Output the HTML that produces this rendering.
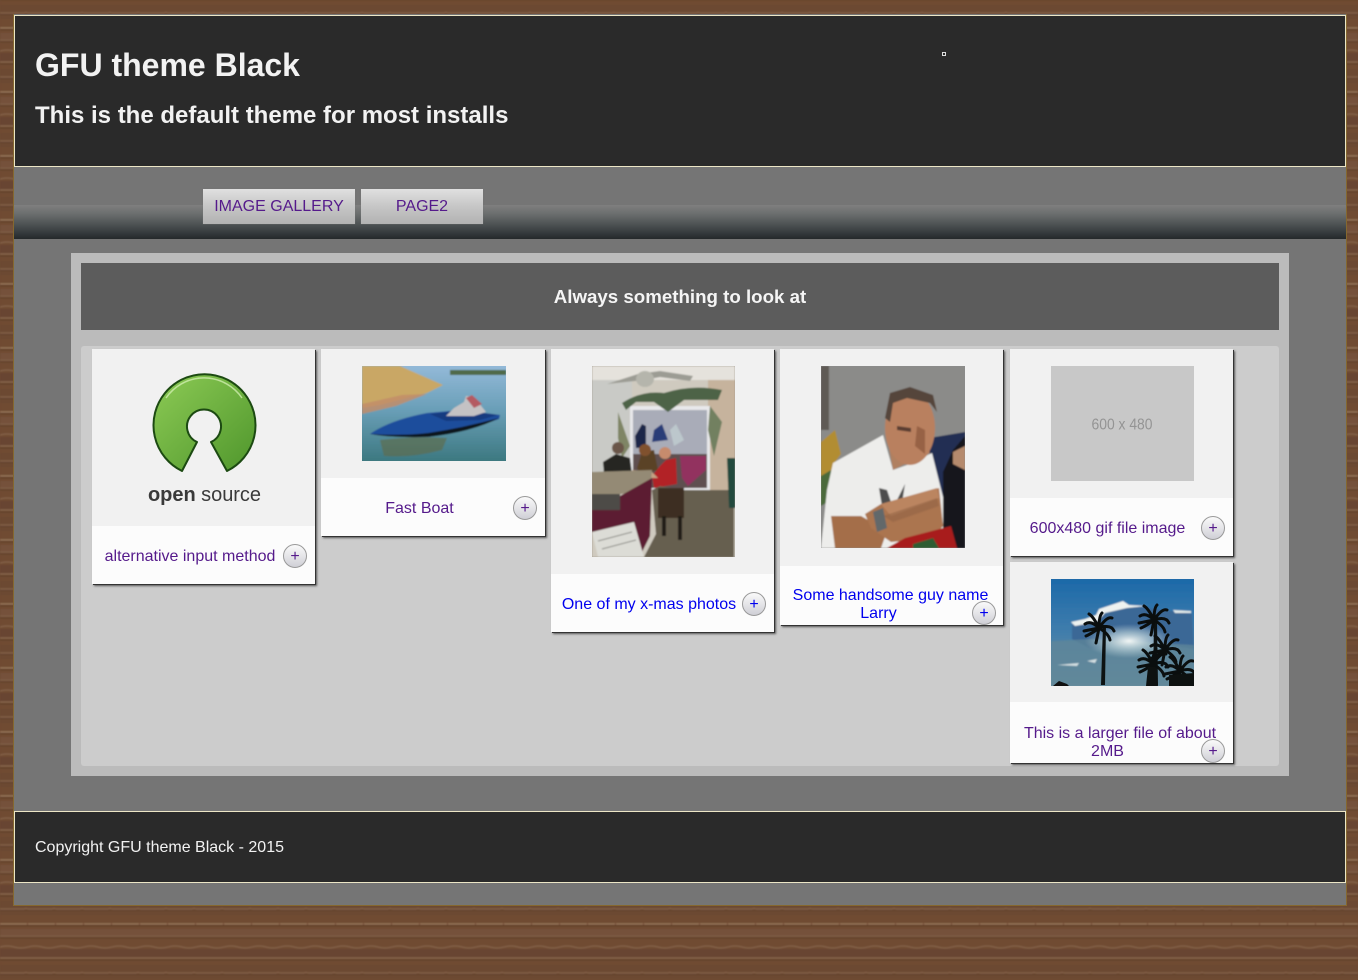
<!DOCTYPE html>
<html><head><meta charset="utf-8"><title>GFU theme Black</title>
<style>
html,body{margin:0;padding:0;width:1358px;height:980px;overflow:hidden;background:#6e4b32;font-family:"Liberation Sans",sans-serif}
.a{position:absolute}
.t{position:absolute;white-space:nowrap;font-size:16px;line-height:18px;color:#551a8b;transform:translateX(-50%)}
.b{color:#0000ee}
.card{position:absolute;width:223px;background:#f1f1f1;box-shadow:1px 1px 0 #333,2px 2px 2px #555;overflow:visible}
.cap{position:absolute;left:0;right:0;bottom:0;background:#fcfcfc}
.plus{position:absolute;width:22px;height:22px;border:1px solid #999;border-radius:50%;background:linear-gradient(#fafafa,#cfcfd6);font-size:16px;line-height:23px;text-align:center;color:#551a8b}
.btn{position:absolute;top:189px;height:35px;line-height:35px;text-align:center;font-size:16px;color:#551a8b;background:linear-gradient(#e0e0e0,#c6c6c6 50%,#b2b2b2);box-shadow:0 0 1px #777;box-sizing:border-box}
svg{display:block;position:absolute}
</style></head><body>
<svg style="left:0;top:0" width="1358" height="980">
<defs>
<pattern id="w" x="0" y="5" width="28" height="64" patternUnits="userSpaceOnUse">
<rect width="28" height="64" fill="#6f4b31"/>
<rect y="0" width="28" height="14" fill="#6c4830"/>
<rect y="28" width="28" height="8" fill="#75513a"/>
<rect y="48" width="28" height="8" fill="#674430"/>
<path d="M0 8H24Q26 7 28 8" stroke="#84624a" stroke-width="1.200" fill="none"/>
<path d="M0 9.500H28" stroke="#5e3f2a" stroke-width="1"/>
<path d="M0 23H27" stroke="#97745a" stroke-width="1.400"/>
<path d="M0 24.500H28" stroke="#54361f" stroke-width="1"/>
<path d="M0 35H28" stroke="#80604a" stroke-width="1"/>
<path d="M0 37H28" stroke="#5f3f2b" stroke-width="1"/>
<path d="M0 46Q7 44 14 46T28 46" stroke="#84624a" stroke-width="1.200" fill="none"/>
<path d="M0 57H28" stroke="#886650" stroke-width="1.200"/>
<path d="M0 59H28" stroke="#5c3c28" stroke-width="1"/>
</pattern>
<filter id="s"><feGaussianBlur stdDeviation=".7"/></filter>
</defs>
<rect width="1358" height="980" fill="url(#w)" filter="url(#s)"/>
</svg>

<div class="a" style="left:13px;top:14px;width:1332px;height:891px;background:#757575;border:1px solid #85682f;border-top:0"></div>

<div class="a" style="left:14px;top:15px;width:1330px;height:150px;background:#2a2a2a;border:1px solid #ece6c6"></div>
<div class="a" style="left:35px;top:46px;font-size:32px;line-height:38px;font-weight:bold;color:#f2f2f2;white-space:nowrap">GFU theme Black</div>
<div class="a" style="left:35px;top:101px;font-size:24px;line-height:30px;font-weight:bold;color:#f2f2f2;white-space:nowrap">This is the default theme for most installs</div>
<div class="a" style="left:942px;top:52px;width:2px;height:2px;border:1px solid #ddd"></div>

<div class="a" style="left:14px;top:205px;width:1332px;height:34px;background:linear-gradient(#7f7f7f 0,#6c6f6f 25%,#4f5455 55%,#32373a 85%,#24282a 100%)"></div>
<div class="btn" style="left:203px;width:152px">IMAGE GALLERY</div>
<div class="btn" style="left:361px;width:122px">PAGE2</div>

<div class="a" style="left:71px;top:253px;width:1218px;height:523px;background:#bbb"></div>
<div class="a" style="left:81px;top:263px;width:1198px;height:67px;background:#5c5c5c"></div>
<div class="a" style="left:81px;top:286px;width:1198px;text-align:center;font-size:18.720px;line-height:21px;font-weight:bold;color:#f5f5f5">Always something to look at</div>
<div class="a" style="left:81px;top:346px;width:1198px;height:420px;background:#ccc;border-radius:3px"></div>

<!-- card 1 -->
<div class="card" style="left:92px;top:349px;height:235px"><div class="cap" style="height:58px"></div></div>
<svg style="left:148px;top:370px" width="114" height="140" viewBox="148 370 114 140">
<defs><linearGradient id="g1" x1="0" y1="0" x2="1" y2="1"><stop offset="0" stop-color="#8dcb55"/><stop offset="1" stop-color="#4f962c"/></linearGradient></defs>
<path d="M182 471A51 51 0 1 1 227 471L211 442A17 17 0 1 0 197 442Z" fill="url(#g1)" stroke="#1c4a12" stroke-width="2" stroke-linejoin="round"/>
<path d="M166 398A46 46 0 0 1 242 398" fill="none" stroke="#d4f0b4" stroke-width="1.500" opacity=".75"/>
<text x="148" y="501" font-family="Liberation Sans" font-size="20" fill="#3a3a3a" textLength="113"><tspan font-weight="bold">open</tspan> source</text>
</svg>
<div class="t" style="left:190px;top:548px">alternative input method</div>
<div class="plus" style="left:283px;top:544px">+</div>

<!-- card 2 -->
<div class="card" style="left:321px;top:349px;height:187px;width:224px"><div class="cap" style="height:58px"></div></div>
<svg style="left:362px;top:366px" width="144" height="95" viewBox="0 0 144 95">
<defs><linearGradient id="g2" x1="0" y1="0" x2="0" y2="1"><stop offset="0" stop-color="#93b9d8"/><stop offset=".45" stop-color="#6a9fb8"/><stop offset="1" stop-color="#3c7880"/></linearGradient></defs>
<rect width="144" height="95" fill="url(#g2)"/>
<g filter="url(#s)">
<rect width="144" height="95" fill="url(#g2)"/>
<path d="M0 0H38L81 19L65 27L18 39L0 42Z" fill="#c9a765"/>
<path d="M0 38L40 29L65 28L34 40L0 48Z" fill="#c28d68" opacity=".85"/>
<path d="M88 4H144V9H88Z" fill="#4f6b48"/>
<path d="M18 74Q50 70 85 72L80 84Q50 92 22 90Z" fill="#5e6c4f" opacity=".7"/>
<path d="M8 68Q28 54 65 47L100 44L138 49L137 53Q95 68 65 70Q30 71 8 68Z" fill="#1f4e9c"/>
<path d="M8 68Q40 70 66 67Q100 62 137 52Q110 66 66 71Q30 72 8 68Z" fill="#0c141f"/>
<path d="M68 48L100 44L136 49L118 54L84 55Z" fill="#163a80"/>
<path d="M84 50L92 42L102 36L104 30L112 31L124 46L112 50Z" fill="#c4c2c4"/>
<path d="M104 32L110 29L120 38L112 42Z" fill="#b45a62"/>
</g>
</svg>
<div class="t" style="left:419.500px;top:500px">Fast Boat</div>
<div class="plus" style="left:513px;top:496px">+</div>

<!-- card 3 -->
<div class="card" style="left:551px;top:349px;height:283px"><div class="cap" style="height:58px"></div></div>
<svg style="left:592px;top:366px" width="143" height="191" viewBox="0 0 143 191">
<rect width="143" height="191" fill="#9c9488"/>
<g filter="url(#s)">
<rect width="143" height="191" fill="#cfcabf"/>
<rect width="143" height="14" fill="#e5e2dc"/>
<rect x="0" y="14" width="40" height="110" fill="#c9cac6"/>
<rect x="116" y="14" width="27" height="110" fill="#c6b39d"/>
<rect x="38" y="40" width="80" height="84" fill="#e8e8ea"/>
<rect x="41" y="44" width="74" height="48" fill="#a9acb8"/>
<rect x="41" y="88" width="74" height="34" fill="#5f4f50"/>
<path d="M15 18L46 8L68 5L101 10L98 15L68 11L52 14Z" fill="#9c9c94"/>
<ellipse cx="53" cy="13" rx="9" ry="8" fill="#b5b5ac"/>
<path d="M30 37Q50 24 72 27Q100 18 130 24L126 34L92 34L76 46L62 36L44 36L34 44Z" fill="#4e6446"/>
<path d="M26 46L38 80L30 92L26 72Z" fill="#7f8565"/>
<path d="M118 40L130 56L122 90L116 64Z" fill="#728061"/>
<path d="M43 70L50 58L54 60L54 82L44 82Z" fill="#1f2648"/><path d="M62 64L70 58L76 74L60 76Z" fill="#2b3e78"/><path d="M78 64L84 58L92 74L82 80Z" fill="#bcc7cc"/>
<path d="M88 90H114V104L96 120L90 112Z" fill="#92305f"/>
<path d="M11 96L24 88L38 92L40 108L12 108Z" fill="#262520"/><circle cx="26" cy="82" r="6" fill="#6b574a"/>
<path d="M45 102L50 86L62 84L66 104L48 108Z" fill="#5a4228"/><circle cx="53" cy="84" r="6" fill="#80512e"/>
<path d="M68 100L74 94L84 92L85 118L62 122L60 110Z" fill="#b22428"/><circle cx="73" cy="87" r="6" fill="#c78b6d"/>
<path d="M40 104L60 106L66 112L44 112Z" fill="#c4a183"/>
<path d="M0 106L60 104L58 124L0 132Z" fill="#948a74"/>
<path d="M0 130H28L60 112L58 170L50 186L0 166Z" fill="#5c1a32"/>
<path d="M0 128H28V144H0Z" fill="#4d4b46"/>
<path d="M60 124L68 120L90 124L142 124V191H52L64 168Z" fill="#665e50"/>
<path d="M66 122H92V152H66Z" fill="#3d2f24"/><path d="M70 150H74V170H70ZM86 150H90V174H86Z" fill="#241a14"/>
<path d="M0 166L42 156L52 191H6Z" fill="#dcdcd6"/>
<path d="M6 175L40 166M10 183L44 174" stroke="#8d8d88" stroke-width="1"/>
<path d="M135 92H143V142H137Z" fill="#20493c"/>
</g>
</svg>
<div class="t b" style="left:649px;top:596px">One of my x-mas photos</div>
<div class="plus" style="left:742px;top:592px;color:#0000ee">+</div>

<!-- card 4 -->
<div class="card" style="left:780px;top:349px;height:276px"><div class="cap" style="height:59px"></div></div>
<svg style="left:821px;top:366px" width="144" height="182" viewBox="0 0 144 182">
<rect width="144" height="182" fill="#8b8b89"/>
<g filter="url(#s)">
<rect width="144" height="182" fill="#8b8b89"/>
<rect width="8" height="64" fill="#5f5a54"/>
<path d="M0 76L14 64L20 88L14 96L8 132L0 140Z" fill="#b28d33"/>
<path d="M0 110L10 104L10 134L0 140Z" fill="#4c6a3a"/>
<path d="M108 72L144 66V182H112Z" fill="#222f52"/>
<path d="M122 106L132 84L144 70V182H122Z" fill="#14161a"/>
<path d="M132 86L144 80V104L132 98Z" fill="#b58a6d"/>
<path d="M0 182L6 124L12 97L62 69L72 104L86 99L111 87L122 131L122 182Z" fill="#ededeb"/>
<path d="M66 71L72 104L86 97L109 87L100 70L70 60Z" fill="#b08060"/>
<ellipse cx="89" cy="62" rx="25" ry="37" fill="#b9805f"/>
<path d="M64 52L69 27L89 21L112 29L116 46L109 37L86 32L72 37L69 56Z" fill="#54443a"/>
<path d="M96 60L104 64L104 88L94 80Z" fill="#8e5a3e" opacity=".8"/>
<path d="M76 60L90 62L90 66L76 64Z" fill="#5a3d30"/>
<path d="M58 122L66 124L72 142L84 118L80 144L62 146Z" fill="#4d4d4d"/>
<path d="M10 150L40 150L66 165L60 182H14Z" fill="#a46e4a"/>
<path d="M44 148L60 138L118 122L122 160L112 172L70 176L50 162Z" fill="#ab7450"/>
<path d="M60 138L116 122L118 132L70 150Z" fill="#bb8560"/>
<path d="M62 150L116 132L118 140L72 156Z" fill="#8e5f42" opacity=".5"/>
<path d="M52 146L62 142L66 162L56 166Z" fill="#62676a"/>
<path d="M66 182L84 172L130 160L136 182Z" fill="#a81f1d"/>
<path d="M92 178L112 172L118 182H92Z" fill="#2e5c33"/>
</g>
</svg>
<div class="t b" style="left:890.500px;top:587px">Some handsome guy name</div>
<div class="t b" style="left:878.500px;top:605px">Larry</div>
<div class="plus" style="left:972px;top:601px;color:#0000ee">+</div>

<!-- card 5 -->
<div class="card" style="left:1010px;top:349px;height:207px"><div class="cap" style="height:58px"></div></div>
<svg style="left:1051px;top:366px" width="143" height="115" viewBox="0 0 143 115">
<rect width="143" height="115" fill="#c8c8c8"/>
<text x="71" y="63.500" font-family="Liberation Sans" font-size="16" fill="#949494" text-anchor="middle" textLength="61" lengthAdjust="spacingAndGlyphs">600 x 480</text>
</svg>
<div class="t" style="left:1107.500px;top:520px">600x480 gif file image</div>
<div class="plus" style="left:1201px;top:516px">+</div>

<!-- card 6 -->
<div class="card" style="left:1010px;top:562px;height:201px"><div class="cap" style="height:61px"></div></div>
<svg style="left:1051px;top:579px" width="143" height="107" viewBox="0 0 143 107">
<defs><linearGradient id="g6" x1="0" y1="0" x2="0" y2="1"><stop offset="0" stop-color="#1c69a8"/><stop offset=".45" stop-color="#3c7bac"/><stop offset="1" stop-color="#6f929f"/></linearGradient>
<radialGradient id="g7" cx=".5" cy=".5" r=".5"><stop offset="0" stop-color="#f4f8f6"/><stop offset=".5" stop-color="#b8cfd6" stop-opacity=".7"/><stop offset="1" stop-color="#b5c9d0" stop-opacity="0"/></radialGradient>
<g id="palm" fill="none" stroke="#0a0e0e" stroke-width="3" stroke-linecap="round"><path d="M0 0Q-8 -8 -14 -4M0 0Q-6 -12 -10 -14M0 0Q0 -12 3 -15M0 0Q8 -12 13 -10M0 0Q12 -4 15 3M0 0Q10 6 11 12M0 0Q-2 10 -3 15M0 0Q-8 6 -13 8M0 0Q-10 2 -15 3"/></g>
</defs>
<rect width="143" height="107" fill="url(#g6)"/>
<g filter="url(#s)">
<rect width="143" height="107" fill="url(#g6)"/>
<path d="M21 46L46 38L76 26L141 35L143 70L90 62L40 70L21 60Z" fill="#3b6796"/>
<path d="M0 62L40 60L143 66V107H0Z" fill="#5f8699" opacity=".8"/>
<ellipse cx="78" cy="62" rx="44" ry="17" fill="url(#g7)"/>
<path d="M20 43L34 40L45 36L48 30L72 22L78 26L96 27L76 29L54 34L46 43L24 47Z" fill="#eef2f0"/>
<path d="M122 31L140 32L140 34L124 34Z" fill="#e0e8e8"/>
<path d="M6 86L28 84L26 87ZM36 82L46 80L44 84Z" fill="#d4dfe2"/>
</g>
<path d="M50 106L52 46L55 46L54 106Z" fill="#0d1212"/>
<path d="M102 106L103 42L106 42L107 106Z" fill="#0d1212"/>
<use href="#palm" x="48" y="49"/><use href="#palm" x="103" y="41"/><use href="#palm" x="114" y="71"/><use href="#palm" x="102" y="85"/><use href="#palm" x="129" y="92"/>
<path d="M95 107L97 88L104 88L107 107ZM118 107V96L143 94V107Z" fill="#0d1110"/>
<path d="M2 107L8 102L16 105L18 107Z" fill="#101010"/>
</svg>
<div class="t" style="left:1120px;top:725px">This is a larger file of about</div>
<div class="t" style="left:1107.500px;top:743px">2MB</div>
<div class="plus" style="left:1201px;top:739px">+</div>

<div class="a" style="left:14px;top:811px;width:1330px;height:70px;background:#2a2a2a;border:1px solid #ece6c6"></div>
<div class="a" style="left:35px;top:839px;font-size:16px;line-height:18px;color:#f2f2f2;white-space:nowrap">Copyright GFU theme Black - 2015</div>
</body></html>
